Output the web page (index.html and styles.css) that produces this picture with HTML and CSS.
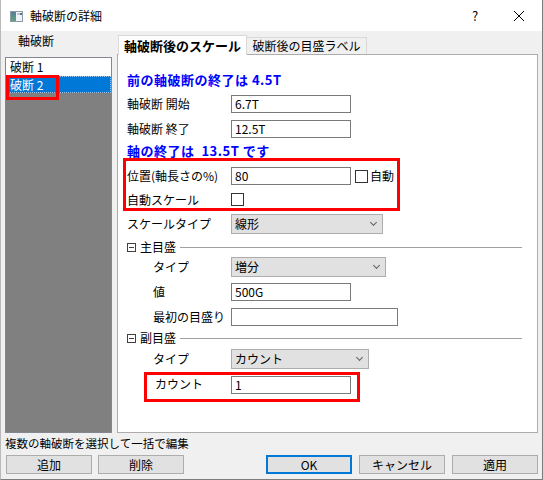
FILE: index.html
```html
<!DOCTYPE html>
<html lang="ja">
<head>
<meta charset="utf-8">
<title>軸破断の詳細</title>
<link rel="stylesheet" href="styles.css">
</head>
<body>
<div class="window">
  <header class="titlebar">
    <svg class="app-icon" width="13" height="11" viewBox="0 0 13 11">
      <defs>
        <linearGradient id="pane" x1="0" y1="0" x2="0" y2="1">
          <stop offset="0" stop-color="#4f7f9a"/>
          <stop offset="1" stop-color="#5fa37a"/>
        </linearGradient>
      </defs>
      <rect x="0.5" y="0.5" width="12" height="10" fill="#eef3f7" stroke="#8d99a4"/>
      <rect x="1" y="1" width="5" height="9" fill="url(#pane)"/>
      <rect x="7" y="2" width="5" height="2" fill="#b9c7d3"/>
      <rect x="10" y="2" width="2" height="2" fill="#5c6f80"/>
    </svg>
    <span class="title">軸破断の詳細</span>
    <span class="help">?</span>
    <svg class="close" width="12" height="12" viewBox="0 0 12 12">
      <path d="M1 1 L11 11 M11 1 L1 11" stroke="#000" stroke-width="1" fill="none"/>
    </svg>
  </header>

  <main class="body">
    <aside class="breaks">
      <div class="breaks-label">軸破断</div>
      <ul class="break-list">
        <li class="break-item">破断 1</li>
        <li class="break-item selected">破断 2<span class="mark mark-list"></span></li>
      </ul>
    </aside>

    <section class="tabs">
      <div class="tab-strip">
        <div class="tab active">軸破断後のスケール</div>
        <div class="tab">破断後の目盛ラベル</div>
      </div>
      <div class="tab-panel">
        <div class="heading h-first">前の軸破断の終了は 4.5T</div>

        <div class="row r26">
          <span class="label">軸破断 開始</span>
          <span class="input w120">6.7T</span>
        </div>
        <div class="row r23">
          <span class="label">軸破断 終了</span>
          <span class="input w120">12.5T</span>
        </div>

        <div class="heading h-second">軸の終了は&nbsp; 13.5T です</div>

        <div class="group group-position">
          <div class="row r30">
            <span class="label">位置(軸長さの%)</span>
            <span class="input w120">80</span>
            <span class="check check-inline"></span>
            <span class="check-text">自動</span>
          </div>
          <div class="row r17">
            <span class="label">自動スケール</span>
            <span class="check"></span>
          </div>
        </div>

        <div class="row r31">
          <span class="label">スケールタイプ</span>
          <span class="select w152">線形<span class="chevron"></span></span>
        </div>

        <div class="section s16">
          <span class="toggle"></span>
          <span class="section-title">主目盛</span>
          <span class="rule"></span>
        </div>
        <div class="row r24 sub">
          <span class="label">タイプ</span>
          <span class="select w155">増分<span class="chevron"></span></span>
        </div>
        <div class="row r26 sub">
          <span class="label">値</span>
          <span class="input w120">500G</span>
        </div>
        <div class="row r24 sub">
          <span class="label">最初の目盛り</span>
          <span class="input w167"></span>
        </div>

        <div class="section s18">
          <span class="toggle"></span>
          <span class="section-title">副目盛</span>
          <span class="rule"></span>
        </div>
        <div class="row r24 sub">
          <span class="label">タイプ</span>
          <span class="select w138">カウント<span class="chevron"></span></span>
        </div>

        <div class="group group-count">
          <div class="row r24 top">
            <span class="label">カウント</span>
            <span class="input w120">1</span>
          </div>
        </div>
      </div>
    </section>
  </main>

  <div class="hint">複数の軸破断を選択して一括で編集</div>

  <footer class="buttons">
    <button class="btn">追加</button>
    <button class="btn">削除</button>
    <span class="spacer"></span>
    <button class="btn default">OK</button>
    <button class="btn">キャンセル</button>
    <button class="btn">適用</button>
  </footer>
</div>
</body>
</html>
```

FILE: styles.css
```css
* {
  box-sizing: border-box;
}

html,
body {
  margin: 0;
  padding: 0;
}

body {
  width: 543px;
  height: 480px;
  overflow: hidden;
  background: #f0f0f0;
  font-family: "Noto Sans CJK JP", "Noto Sans", sans-serif;
  font-size: 12px;
  color: #000;
}

.window {
  width: 543px;
  height: 480px;
  display: flex;
  flex-direction: column;
  background: #f0f0f0;
  border-left: 1px solid #b9b9b9;
  border-right: 1px solid #7d7d7d;
  border-bottom: 1px solid #7d7d7d;
}

/* title bar */
.titlebar {
  height: 31px;
  flex: none;
  display: flex;
  align-items: center;
  background: #fff;
  padding-left: 9px;
}

.app-icon {
  display: block;
  margin-top: 1px;
}

.title {
  margin-left: 7px;
  line-height: 16px;
}

.help {
  margin-left: auto;
  width: 8px;
  font-size: 13px;
  line-height: 16px;
}

.close {
  display: block;
  margin-left: 33px;
  margin-right: 17px;
}

/* main area */
.body {
  height: 402px;
  flex: none;
  display: flex;
  padding-left: 4px;
}

.breaks {
  width: 107px;
  display: flex;
  flex-direction: column;
}

.breaks-label {
  height: 26px;
  padding-left: 13px;
  padding-top: 1px;
  line-height: 18px;
}

.break-list {
  list-style: none;
  margin: 0;
  padding: 0;
  height: 376px;
  background: #808080;
  border: 1px solid #828790;
}

.break-item {
  position: relative;
  height: 18px;
  line-height: 18px;
  padding-left: 4px;
  background: #fff;
}

.break-item.selected {
  height: 17px;
  line-height: 17px;
  background: #0078d7;
  color: #fff;
  outline: 1px dotted #9fc9ee;
  outline-offset: -1px;
}

/* red highlight frames drawn over the dialog */
.mark {
  position: absolute;
  border: 3px solid #ff0000;
  pointer-events: none;
}

.mark-list {
  left: 0;
  top: -1px;
  width: 53px;
  height: 25px;
}

/* tab control */
.tabs {
  width: 421px;
  margin-left: 5px;
  display: flex;
  flex-direction: column;
}

.tab-strip {
  height: 23px;
  flex: none;
  display: flex;
  align-items: flex-end;
  padding-left: 1px;
}

.tab {
  height: 17px;
  padding: 0 5px;
  background: #f0f0f0;
  border: 1px solid #d9d9d9;
  border-left: none;
  border-bottom: none;
  line-height: 16px;
  color: #000;
  width: 120px;
  text-align: center;
}

.tab.active {
  position: relative;
  z-index: 1;
  height: 20px;
  width: 129px;
  margin-bottom: -1px;
  background: #fff;
  border-left: 1px solid #d9d9d9;
  font-weight: bold;
  font-size: 13px;
  line-height: 19px;
  text-align: left;
  padding-left: 5px;
}

.tab-panel {
  height: 379px;
  background: #fff;
  border: 1px solid #adadad;
  padding-top: 12px;
  padding-left: 9px;
}

.heading {
  color: #0000ff;
  font-weight: bold;
  font-size: 13px;
  letter-spacing: 0.5px;
  display: flex;
  align-items: center;
}

.h-first {
  height: 24px;
}

.h-second {
  height: 20px;
}

.row {
  display: flex;
  align-items: center;
}

.row.top {
  align-items: flex-start;
  padding-top: 1px;
}

.r17 { height: 17px; }
.r23 { height: 23px; }
.r24 { height: 24px; }
.r26 { height: 26px; }
.r30 { height: 30px; }
.r31 { height: 31px; }

.label {
  width: 104px;
  flex: none;
  white-space: nowrap;
  line-height: 16px;
}

.sub .label {
  width: 78px;
  margin-left: 26px;
}

.input {
  height: 18px;
  flex: none;
  border: 1px solid #7a7a7a;
  background: #fff;
  padding-left: 3px;
  line-height: 16px;
}

.select {
  position: relative;
  height: 20px;
  flex: none;
  border: 1px solid #adadad;
  background: #e1e1e1;
  padding-left: 3px;
  line-height: 18px;
}

.chevron {
  position: absolute;
  right: 6px;
  top: 5px;
  width: 5px;
  height: 5px;
  border-right: 1px solid #606060;
  border-bottom: 1px solid #606060;
  transform: rotate(45deg);
}

.w120 { width: 120px; }
.w138 { width: 138px; }
.w152 { width: 152px; }
.w155 { width: 155px; }
.w167 { width: 167px; }

.check {
  width: 13px;
  height: 13px;
  flex: none;
  border: 1px solid #333;
  background: #fff;
}

.check-inline {
  margin-left: 4px;
}

.check-text {
  margin-left: 2px;
  line-height: 16px;
}

/* grouped rows framed in red */
.group {
  outline: 3px solid #ff0000;
}

.group-position {
  width: 271px;
  margin-left: -1px;
  padding-left: 1px;
  margin-top: 1px;
}

.group-position .label {
  width: 104px;
}

.group-count {
  width: 210px;
  margin-left: 20px;
  margin-top: 4px;
  padding-left: 8px;
}

.group-count .label {
  width: 76px;
}

/* collapsible section headers */
.section {
  display: flex;
  align-items: center;
  padding-right: 15px;
}

.s16 { height: 16px; }
.s18 { height: 18px; }

.toggle {
  position: relative;
  width: 9px;
  height: 9px;
  flex: none;
  border: 1px solid #404040;
}

.toggle::after {
  content: "";
  position: absolute;
  left: 1px;
  right: 1px;
  top: 3px;
  height: 1px;
  background: #404040;
}

.section-title {
  margin-left: 4px;
  line-height: 16px;
}

.rule {
  flex: 1;
  height: 1px;
  margin-left: 4px;
  background: #a0a0a0;
}

/* footer */
.hint {
  height: 22px;
  flex: none;
  padding-left: 4px;
  font-size: 11.5px;
  line-height: 20px;
}

.buttons {
  display: flex;
  padding-left: 5px;
  padding-right: 4px;
}

.btn {
  width: 86px;
  height: 19px;
  margin: 0;
  padding: 0;
  border: 1px solid #adadad;
  background: #e1e1e1;
  font-family: inherit;
  font-size: 12px;
  line-height: 17px;
  color: #000;
}

.btn + .btn {
  margin-left: 6px;
}

.spacer {
  flex: 1;
}

.spacer + .btn {
  margin-left: 0;
}

.btn.default {
  border: 2px solid #0078d7;
  line-height: 15px;
}

.default ~ .btn {
  margin-left: 7px;
}
```
